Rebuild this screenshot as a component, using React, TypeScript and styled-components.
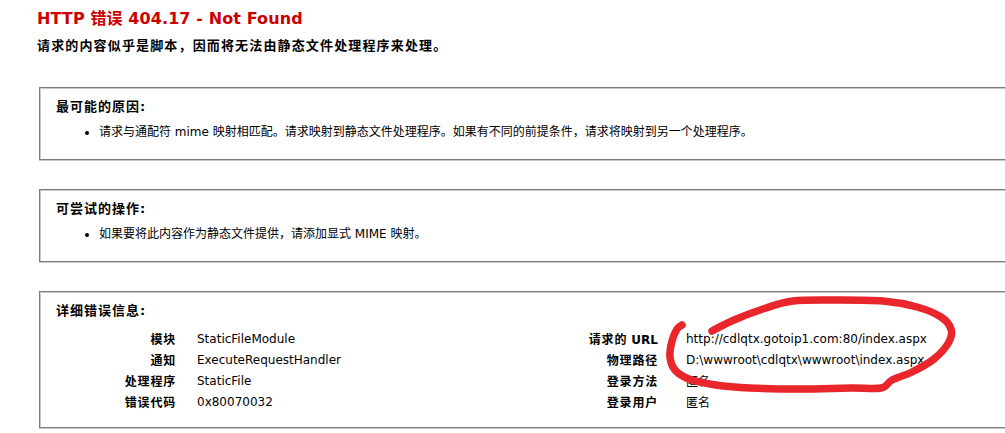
import styled, { createGlobalStyle } from "styled-components";

const GlobalStyle = createGlobalStyle`
  html, body {
    margin: 0;
    padding: 0;
    background: #fff;
    overflow: hidden;
  }
  body {
    font-family: "DejaVu Sans", "Noto Sans CJK SC", sans-serif;
    font-size: 12px;
    color: #000;
  }
`;

type Row = { label: string; value: string };

const leftRows: Row[] = [
  { label: "模块", value: "StaticFileModule" },
  { label: "通知", value: "ExecuteRequestHandler" },
  { label: "处理程序", value: "StaticFile" },
  { label: "错误代码", value: "0x80070032" },
];

const rightRows: Row[] = [
  { label: "请求的 URL", value: "http://cdlqtx.gotoip1.com:80/index.aspx" },
  { label: "物理路径", value: "D:\\wwwroot\\cdlqtx\\wwwroot\\index.aspx" },
  { label: "登录方法", value: "匿名" },
  { label: "登录用户", value: "匿名" },
];

const Page = styled.div`
  position: relative;
  width: 1005px;
  height: 433px;
  overflow: hidden;
  box-sizing: border-box;
  padding: 7px 0 0 37px;
`;

const Title = styled.h2`
  margin: 0;
  font-family: "DejaVu Sans", "Noto Sans CJK SC", sans-serif;
  font-weight: bold;
  font-size: 16px;
  letter-spacing: 0.1px;
  line-height: 24px;
  color: #cc0000;
`;

const Subtitle = styled.h3`
  margin: 5px 0 0 0;
  font-weight: bold;
  font-size: 13px;
  letter-spacing: 1.15px;
  line-height: 20px;
`;

const Box = styled.div<{ $padBottom?: number }>`
  width: 1000px;
  margin: 31px 0 0 2px;
  padding: 11px 0 ${({ $padBottom }) => $padBottom ?? 19}px 16px;
  border: 1px solid #7c7c7c;
  border-right: none;
  box-shadow: inset 1px 1px 0 #c9c9c9, 0 1px 0 #c9c9c9;

  & + & {
    margin-top: 29px;
  }
`;

const Heading = styled.div`
  font-weight: bold;
  font-size: 13px;
  letter-spacing: 1px;
  line-height: 16px;
`;

const List = styled.ul`
  margin: 9px 0 0 0;
  padding-left: 43px;
  list-style: disc;
  line-height: 16px;
`;

const Details = styled.div`
  display: flex;
  margin-top: 9px;
`;

const Table = styled.div<{ $labelWidth: number; $gap: number; $width?: number }>`
  display: grid;
  grid-template-columns: ${({ $labelWidth }) => $labelWidth}px auto;
  column-gap: ${({ $gap }) => $gap}px;
  grid-auto-rows: 21px;
  align-items: center;
  flex: none;
  width: ${({ $width }) => ($width ? `${$width}px` : "auto")};
`;

const Label = styled.div`
  text-align: right;
  font-weight: bold;
  letter-spacing: 0.8px;
  white-space: nowrap;
`;

const Latin = styled.span`
  letter-spacing: 0;
`;

const Value = styled.div`
  white-space: nowrap;
`;

const Scribble = styled.svg`
  position: absolute;
  top: 0;
  left: 0;
  pointer-events: none;
`;

// hand drawn circle, points in page coords
const circlePoints: [number, number][] = [
  [682, 325], [677, 329], [672, 341], [670, 357], [675, 370], [689, 379],
  [716, 385], [750, 388], [800, 389], [850, 388], [881, 388], [892, 380],
  [912, 372], [934, 359], [949, 342], [951, 329], [941, 317], [917, 307],
  [883, 301], [833, 300], [793, 301], [766, 308], [734, 320], [712, 331],
];

const toSmoothPath = (pts: [number, number][]) => {
  let d = `M ${pts[0][0]} ${pts[0][1]}`;
  for (let i = 0; i < pts.length - 1; i++) {
    const p0 = pts[i - 1] || pts[i];
    const p1 = pts[i];
    const p2 = pts[i + 1];
    const p3 = pts[i + 2] || p2;
    const c1x = p1[0] + (p2[0] - p0[0]) / 6;
    const c1y = p1[1] + (p2[1] - p0[1]) / 6;
    const c2x = p2[0] - (p3[0] - p1[0]) / 6;
    const c2y = p2[1] - (p3[1] - p1[1]) / 6;
    d += ` C ${c1x} ${c1y} ${c2x} ${c2y} ${p2[0]} ${p2[1]}`;
  }
  return d;
};

// bold label: CJK part gets letter spacing, the ascii tail doesn't
const renderLabel = (label: string) => {
  const m = label.match(/^(.*?)( ?[A-Za-z]+)$/);
  if (!m) return label;
  return (
    <>
      {m[1]}
      <Latin>{m[2]}</Latin>
    </>
  );
};

const DetailTable = ({
  rows,
  labelWidth,
  gap,
  width,
}: {
  rows: Row[];
  labelWidth: number;
  gap: number;
  width?: number;
}) => (
  <Table $labelWidth={labelWidth} $gap={gap} $width={width}>
    {rows.map((r) => [
      <Label key={r.label + "-l"}>{renderLabel(r.label)}</Label>,
      <Value key={r.label + "-v"}>{r.value}</Value>,
    ])}
  </Table>
);

const App = () => {
  return (
    <Page>
      <GlobalStyle />
      <Title>HTTP 错误 404.17 - Not Found</Title>
      <Subtitle>请求的内容似乎是脚本，因而将无法由静态文件处理程序来处理。</Subtitle>

      <Box>
        <Heading>最可能的原因:</Heading>
        <List>
          <li>
            请求与通配符 mime 映射相匹配。请求映射到静态文件处理程序。如果有不同的前提条件，请求将映射到另一个处理程序。
          </li>
        </List>
      </Box>

      <Box>
        <Heading>可尝试的操作:</Heading>
        <List>
          <li>如果要将此内容作为静态文件提供，请添加显式 MIME 映射。</li>
        </List>
      </Box>

      <Box $padBottom={15}>
        <Heading>详细错误信息:</Heading>
        <Details>
          <DetailTable rows={leftRows} labelWidth={120} gap={21} width={492} />
          <DetailTable rows={rightRows} labelWidth={110} gap={28} />
        </Details>
      </Box>

      <Scribble viewBox="0 0 1005 433" width="1005" height="433">
        <path
          d={toSmoothPath(circlePoints)}
          fill="none"
          stroke="#e8262b"
          strokeWidth={7.5}
          strokeLinecap="round"
          strokeLinejoin="round"
        />
      </Scribble>
    </Page>
  );
};
export default App;
